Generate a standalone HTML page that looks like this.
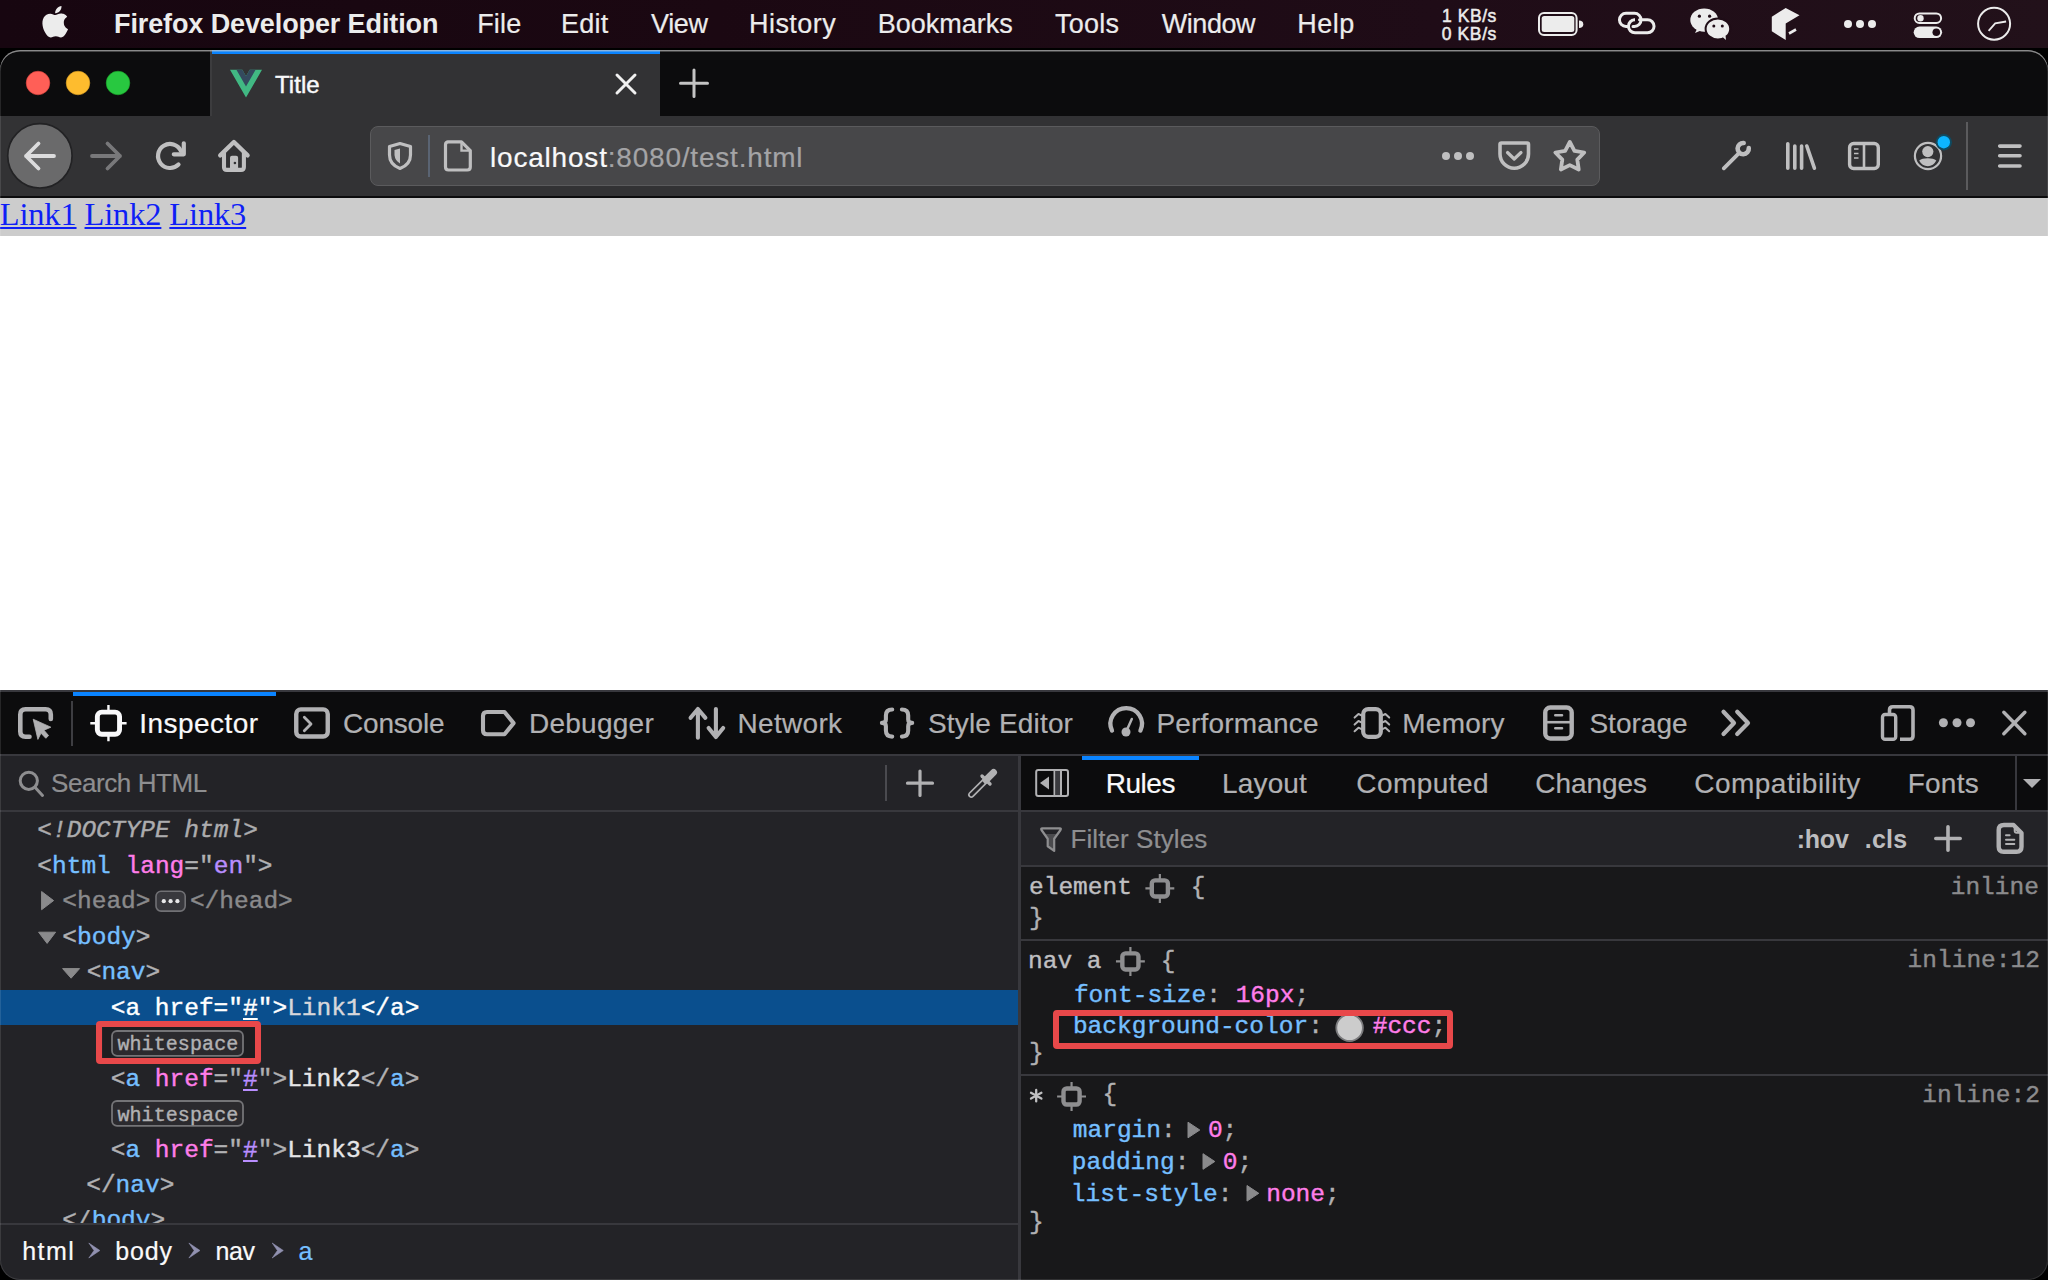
<!DOCTYPE html>
<html><head><meta charset="utf-8"><title>Firefox Developer Edition - Inspector</title>
<style>
html,body{margin:0;padding:0;}
body{width:2048px;height:1280px;position:relative;overflow:hidden;background:#000;font-family:"Liberation Sans",sans-serif;}
.a{position:absolute;}
.t{position:absolute;white-space:pre;line-height:1;}
.mono{-webkit-text-stroke:0.4px currentColor;}
.sans{-webkit-text-stroke:0.2px currentColor;}
svg{position:absolute;overflow:visible;}
.p{color:#b1b1b3}.tg{color:#75bfff}.at{color:#ff7de9}.av{color:#b98eff}.w{color:#f9f9fa}
#win{position:absolute;left:0;top:0;width:2048px;height:1280px;clip-path:inset(50px 0 0 0 round 20px);}
</style></head>
<body>
<div class="a" style="left:0px;top:0px;width:2048px;height:48px;background:linear-gradient(90deg,#170610 0%,#1b0812 35%,#1f0c17 70%,#22111a 100%);"></div>
<svg style="left:0px;top:0px;" width="100" height="48" viewBox="0 0 100 48"><path transform="translate(39.5,6) scale(1.31)" d="M12.152 6.896c-.948 0-2.415-1.078-3.96-1.04-2.04.027-3.91 1.183-4.961 3.014-2.117 3.675-.546 9.103 1.519 12.09 1.013 1.454 2.208 3.09 3.792 3.039 1.52-.065 2.09-.987 3.935-.987 1.831 0 2.35.987 3.96.948 1.637-.026 2.676-1.48 3.676-2.948 1.156-1.688 1.636-3.325 1.662-3.415-.039-.013-3.182-1.221-3.22-4.857-.026-3.04 2.48-4.494 2.597-4.559-1.429-2.09-3.623-2.324-4.39-2.376-2-.156-3.675 1.09-4.61 1.09zM15.53 3.83c.843-1.012 1.4-2.427 1.245-3.83-1.207.052-2.662.805-3.532 1.818-.78.896-1.454 2.338-1.273 3.714 1.338.104 2.715-.688 3.559-1.701" fill="#ececec"/></svg>
<div class="t" style="left:114.00px;top:11.00px;font-size:27px;color:#ececec;font-family:'Liberation Sans',sans-serif;font-weight:700;letter-spacing:-0.11px;">Firefox Developer Edition</div>
<div class="t sans" style="left:477.20px;top:11.00px;font-size:27px;color:#ececec;font-family:'Liberation Sans',sans-serif;letter-spacing:0.17px;">File</div>
<div class="t sans" style="left:561.10px;top:11.00px;font-size:27px;color:#ececec;font-family:'Liberation Sans',sans-serif;letter-spacing:0.23px;">Edit</div>
<div class="t sans" style="left:651.00px;top:11.00px;font-size:27px;color:#ececec;font-family:'Liberation Sans',sans-serif;letter-spacing:-0.38px;">View</div>
<div class="t sans" style="left:749.00px;top:11.00px;font-size:27px;color:#ececec;font-family:'Liberation Sans',sans-serif;letter-spacing:0.45px;">History</div>
<div class="t sans" style="left:877.80px;top:11.00px;font-size:27px;color:#ececec;font-family:'Liberation Sans',sans-serif;">Bookmarks</div>
<div class="t sans" style="left:1055.00px;top:11.00px;font-size:27px;color:#ececec;font-family:'Liberation Sans',sans-serif;letter-spacing:0.24px;">Tools</div>
<div class="t sans" style="left:1161.70px;top:11.00px;font-size:27px;color:#ececec;font-family:'Liberation Sans',sans-serif;letter-spacing:-0.43px;">Window</div>
<div class="t sans" style="left:1297.30px;top:11.00px;font-size:27px;color:#ececec;font-family:'Liberation Sans',sans-serif;letter-spacing:0.46px;">Help</div>
<div class="t sans" style="left:1441.90px;top:8.00px;font-size:17.5px;color:#ececec;font-family:'Liberation Sans',sans-serif;letter-spacing:0.58px;-webkit-text-stroke:0.5px currentColor;">1 KB/s</div>
<div class="t sans" style="left:1441.80px;top:26.00px;font-size:17.5px;color:#ececec;font-family:'Liberation Sans',sans-serif;letter-spacing:0.60px;-webkit-text-stroke:0.5px currentColor;">0 KB/s</div>
<svg style="left:1530px;top:5px;" width="60" height="38" viewBox="1530 5 60 38"><rect x="1539" y="13.1" width="37.6" height="21.9" rx="5" fill="none" stroke="#ececec" stroke-width="2"/><rect x="1541.7" y="15.9" width="32.6" height="16.2" rx="2.5" fill="#ececec"/><path d="M1579 20.5 a4 3.5 0 0 1 0 7.5z" fill="#ececec"/></svg>
<svg style="left:1612px;top:5px;" width="50" height="38" viewBox="1612 5 50 38"><path d="M1627.5 26.4 H1626 A6.55 6.55 0 0 1 1626 13.3 H1634.5 A6.55 6.55 0 0 1 1634.5 26.4 H1633" fill="none" stroke="#ececec" stroke-width="3" stroke-linecap="round"/><path d="M1639.5 19.7 H1647.5 A6.55 6.55 0 0 1 1647.5 32.8 H1635 A6.55 6.55 0 0 1 1635 19.7 H1634" fill="none" stroke="#ececec" stroke-width="3" stroke-linecap="round"/></svg>
<svg style="left:1685px;top:3px;" width="50" height="42" viewBox="1685 3 50 42"><ellipse cx="1704.2" cy="20.1" rx="13.9" ry="11.7" fill="#ececec"/><path d="M1697 29 l-2 4 l6 -2.5z" fill="#ececec"/><ellipse cx="1717.9" cy="28.9" rx="12.3" ry="10.5" fill="#ececec" stroke="#1f0d17" stroke-width="2"/><path d="M1722.5 37 l3.5 3 l-0.5 -4.5z" fill="#ececec"/><circle cx="1699.4" cy="16.2" r="1.6" fill="#1f0d17"/><circle cx="1709.6" cy="16.2" r="1.6" fill="#1f0d17"/><circle cx="1713.8" cy="25.9" r="1.5" fill="#1f0d17"/><circle cx="1722.3" cy="25.9" r="1.5" fill="#1f0d17"/></svg>
<svg style="left:1765px;top:3px;" width="40" height="42" viewBox="1765 3 40 42"><path d="M1785.7 8 L1799.5 15.3 L1785.7 23.5 L1785.7 40 L1771.8 31.3 L1771.8 16.7 Z" fill="#ececec"/><path d="M1789 33.5 L1796 29.5" stroke="#ececec" stroke-width="2.6"/></svg>
<svg style="left:1840px;top:15px;" width="40" height="18" viewBox="1840 15 40 18"><circle cx="1848" cy="24" r="4" fill="#ececec"/><circle cx="1860" cy="24" r="4" fill="#ececec"/><circle cx="1872" cy="24" r="4" fill="#ececec"/></svg>
<svg style="left:1908px;top:8px;" width="40" height="34" viewBox="1908 8 40 34"><rect x="1914.7" y="13.4" width="26.4" height="9.6" rx="4.8" fill="none" stroke="#ececec" stroke-width="2"/><circle cx="1920.5" cy="18.2" r="3.2" fill="#ececec"/><rect x="1913.7" y="26.5" width="28.4" height="11.6" rx="5.8" fill="#ececec"/><circle cx="1936.3" cy="32.3" r="3.8" fill="#1f0d17"/></svg>
<svg style="left:1970px;top:3px;" width="48" height="42" viewBox="1970 3 48 42"><circle cx="1994.1" cy="23.75" r="16" fill="none" stroke="#ececec" stroke-width="2"/><path d="M1988.6 30.8 L1995.2 23.3 L2006.1 21.5" fill="none" stroke="#ececec" stroke-width="1.8"/></svg>
<div id="win">
<div class="a" style="left:0px;top:50px;width:2048px;height:66px;background:#0c0c0d;"></div>
<div class="a" style="left:210px;top:50px;width:450px;height:66px;background:#323234;"></div>
<div class="a" style="left:210px;top:50px;width:2px;height:66px;background:#3c3c3e;"></div>
<div class="a" style="left:212px;top:50px;width:448px;height:4px;background:#0a84ff;"></div>
<svg style="left:20px;top:65px;" width="120" height="36" viewBox="20 65 120 36"><circle cx="38" cy="83" r="11.8" fill="#ff5f57" stroke="#e0443e" stroke-width="0.6"/><circle cx="78" cy="83" r="11.8" fill="#febc2e" stroke="#dea123" stroke-width="0.6"/><circle cx="118" cy="83" r="11.8" fill="#28c840" stroke="#1aab29" stroke-width="0.6"/></svg>
<svg style="left:228px;top:68px;" width="36" height="32" viewBox="228 68 36 32"><g transform="translate(230,69.8) scale(0.1223)"><path d="M161.096.001l-30.225 52.351L100.647.001H-.005l130.877 226.688L261.749.001z" fill="#41b883"/><path d="M161.096.001l-30.225 52.351L100.647.001H52.346l78.526 136.01L209.398.001z" fill="#34495e"/></g></svg>
<div class="t sans" style="left:275.00px;top:73.00px;font-size:24px;color:#f9f9fa;font-family:'Liberation Sans',sans-serif;letter-spacing:0.05px;-webkit-text-stroke:0.45px currentColor;">Title</div>
<svg style="left:610px;top:68px;" width="32" height="32" viewBox="610 68 32 32"><path d="M617 75 L635 93 M635 75 L617 93" stroke="#f0f0f0" stroke-width="3" stroke-linecap="round"/></svg>
<svg style="left:676px;top:65px;" width="36" height="36" viewBox="676 65 36 36"><path d="M694 70 V96.5 M680.5 83.2 H707.5" stroke="#c4c4c4" stroke-width="3" stroke-linecap="round"/></svg>
<div class="a" style="left:0px;top:116px;width:2048px;height:80px;background:#323234;"></div>
<div class="a" style="left:0px;top:196px;width:2048px;height:2px;background:#0c0c0d;"></div>
<svg style="left:4px;top:120px;" width="72" height="72" viewBox="4 120 72 72"><circle cx="39.9" cy="155.8" r="32.2" fill="#6a6a6b" stroke="#222224" stroke-width="1.7"/><path d="M26 156 H54 M38.5 143.5 L26 156 L38.5 168.5" fill="none" stroke="#dcdcdd" stroke-width="3.8" stroke-linecap="round" stroke-linejoin="round"/></svg>
<svg style="left:84px;top:136px;" width="44" height="40" viewBox="84 136 44 40"><path d="M120 156 H92 M107.5 143.5 L120 156 L107.5 168.5" fill="none" stroke="#78787a" stroke-width="3.8" stroke-linecap="round" stroke-linejoin="round"/></svg>
<svg style="left:150px;top:136px;" width="44" height="40" viewBox="150 136 44 40"><path d="M178.5 164.5 A12 12 0 1 1 180.9 150.9" fill="none" stroke="#bfbfc0" stroke-width="4.2" stroke-linecap="round"/><path d="M173.8 154.3 H183.8 V143.3" fill="none" stroke="#bfbfc0" stroke-width="4.2" stroke-linecap="round" stroke-linejoin="round"/></svg>
<svg style="left:212px;top:134px;" width="44" height="42" viewBox="212 134 44 42"><path d="M220.2 155.4 L233.9 142 L247.6 155.4" fill="none" stroke="#bfbfc0" stroke-width="4.3" stroke-linecap="round" stroke-linejoin="round"/><path d="M224 151.5 V167 Q224 169.9 226.9 169.9 H241 Q243.9 169.9 243.9 167 V151.5" fill="none" stroke="#bfbfc0" stroke-width="4.1" stroke-linejoin="round"/><path d="M230 169.5 V157.8 Q230 155.8 232 155.8 H236.1 Q238.1 155.8 238.1 157.8 V169.5 Z" fill="#bfbfc0"/><circle cx="234.9" cy="163" r="1.3" fill="#323234"/></svg>
<div class="a" style="left:370px;top:126px;width:1228px;height:58px;background:#474749;border:1px solid #5b5b5d;border-radius:8px;"></div>
<svg style="left:384px;top:138px;" width="32" height="36" viewBox="384 138 32 36"><path d="M400 143.5 L410.5 146.5 V155 Q410.5 164.5 400 168.5 Q389.5 164.5 389.5 155 V146.5 Z" fill="none" stroke="#bfbfc0" stroke-width="3.2" stroke-linejoin="round"/><path d="M400 148.5 V163.5 Q395 160.5 394.5 155 V150 Z" fill="#bfbfc0"/></svg>
<div class="a" style="left:428px;top:135px;width:2px;height:42px;background:#5a6473;"></div>
<svg style="left:440px;top:136px;" width="36" height="40" viewBox="440 136 36 40"><path d="M447.5 141.8 H461.5 L470.3 150.6 V167 Q470.3 170 467.3 170 H448.5 Q445.5 170 445.5 167 V144.8 Q445.5 141.8 448.5 141.8 Z" fill="none" stroke="#bfbfc0" stroke-width="3.2" stroke-linejoin="round"/><path d="M461.5 142 V150.6 H470" fill="none" stroke="#bfbfc0" stroke-width="2.4"/></svg>
<div class="t sans" style="left:490.00px;top:144.00px;font-size:28px;color:#f9f9fa;font-family:'Liberation Sans',sans-serif;letter-spacing:0.80px;">localhost<span style="color:#a4a4a6">:8080/test.html</span></div>
<svg style="left:1436px;top:146px;" width="44" height="20" viewBox="1436 146 44 20"><circle cx="1446" cy="156" r="4" fill="#bfbfc0"/><circle cx="1458" cy="156" r="4" fill="#bfbfc0"/><circle cx="1470" cy="156" r="4" fill="#bfbfc0"/></svg>
<svg style="left:1494px;top:136px;" width="40" height="40" viewBox="1494 136 40 40"><path d="M1500 144.5 Q1500 143 1501.5 143 H1527 Q1528.5 143 1528.5 144.5 V154 A14.25 14.25 0 0 1 1500 154 Z" fill="none" stroke="#bfbfc0" stroke-width="3.6" stroke-linejoin="round"/><path d="M1507.5 152.5 L1514.2 159 L1521 152.5" fill="none" stroke="#bfbfc0" stroke-width="3.2" stroke-linecap="round" stroke-linejoin="round"/></svg>
<svg style="left:1548px;top:134px;" width="44" height="44" viewBox="1548 134 44 44"><polygon points="1569.80,142.00 1574.44,150.81 1584.26,152.50 1577.31,159.64 1578.73,169.50 1569.80,165.10 1560.87,169.50 1562.29,159.64 1555.34,152.50 1565.16,150.81" fill="none" stroke="#bfbfc0" stroke-width="3.8" stroke-linejoin="round"/></svg>
<svg style="left:1716px;top:136px;" width="40" height="40" viewBox="1716 136 40 40"><path d="M1723.8 168.3 L1738.5 153.6" stroke="#bfbfc0" stroke-width="3.8" stroke-linecap="round"/><path d="M1748.78 148.11 A5.6 5.6 0 1 1 1743.69 143.02" fill="none" stroke="#bfbfc0" stroke-width="4.6" stroke-linecap="round"/></svg>
<svg style="left:1780px;top:136px;" width="42" height="40" viewBox="1780 136 42 40"><path d="M1787.8 143.8 V168.2 M1794.8 146 V168.2 M1801.6 146 V168.2 M1806.8 146 L1814.4 168.2" stroke="#bfbfc0" stroke-width="3.6" stroke-linecap="round"/></svg>
<svg style="left:1842px;top:136px;" width="44" height="40" viewBox="1842 136 44 40"><rect x="1849.6" y="143.5" width="28.7" height="25" rx="4" fill="none" stroke="#bfbfc0" stroke-width="3.4"/><path d="M1864 144 V168" stroke="#bfbfc0" stroke-width="2.6"/><path d="M1854 149 H1858.5 M1854 153.5 H1858.5 M1854 158 H1858.5" stroke="#bfbfc0" stroke-width="1.6"/></svg>
<svg style="left:1908px;top:130px;" width="48" height="46" viewBox="1908 130 48 46"><circle cx="1928" cy="156" r="13.1" fill="none" stroke="#bfbfc0" stroke-width="2.2"/><circle cx="1927.8" cy="151.6" r="5.6" fill="#bfbfc0"/><path d="M1919.2 160.5 Q1922 158.2 1927.8 158.2 Q1933.5 158.2 1936.3 160.5 Q1933.5 166.2 1927.8 166.2 Q1922 166.2 1919.2 160.5 Z" fill="#bfbfc0"/><circle cx="1943.8" cy="142.2" r="8.2" fill="#104a60"/><circle cx="1943.8" cy="142.2" r="6.2" fill="#0db5ff"/></svg>
<div class="a" style="left:1966px;top:122px;width:2px;height:68px;background:#5b5b5d;"></div>
<svg style="left:1992px;top:140px;" width="36" height="32" viewBox="1992 140 36 32"><path d="M1999.7 146.1 H2020 M1999.7 155.8 H2020 M1999.7 166 H2020" stroke="#bfbfc0" stroke-width="3.6" stroke-linecap="round"/></svg>
<div class="a" style="left:0px;top:198px;width:2048px;height:492px;background:#fff;"></div>
<div class="a" style="left:0px;top:198px;width:2048px;height:38px;background:#ccc;"></div>
<div class="t" style="left:-0.30px;top:198.00px;font-size:32.4px;color:#0f1ff6;font-family:'Liberation Serif',serif;letter-spacing:-0.11px;"><span style="text-decoration:underline;text-decoration-thickness:2px;text-underline-offset:2px">Link1</span> <span style="text-decoration:underline;text-decoration-thickness:2px;text-underline-offset:2px">Link2</span> <span style="text-decoration:underline;text-decoration-thickness:2px;text-underline-offset:2px">Link3</span></div>
<div class="a" style="left:0px;top:690px;width:2048px;height:2px;background:#38383d;"></div>
<div class="a" style="left:0px;top:692px;width:2048px;height:62px;background:#0c0c0d;"></div>
<div class="a" style="left:0px;top:754px;width:2048px;height:2px;background:#38383d;"></div>
<div class="a" style="left:73px;top:692px;width:203px;height:4px;background:#0a84ff;"></div>
<svg style="left:10px;top:698px;" width="50" height="50" viewBox="10 698 50 50"><path d="M29.5 736.8 H25.5 Q20.3 736.8 20.3 731.6 V714.4 Q20.3 709.2 25.5 709.2 H45.6 Q50.8 709.2 50.8 714.4 V719" fill="none" stroke="#b1b1b3" stroke-width="4.6" stroke-linecap="round" stroke-linejoin="round"/><path d="M33.2 719.2 L50.9 727.2 L44 730.2 L48.6 735.6 L45.8 738.3 L41 733.2 L37.9 739.4 Z" fill="#b1b1b3" stroke="#b1b1b3" stroke-width="0.8" stroke-linejoin="round"/></svg>
<div class="a" style="left:71px;top:701px;width:2px;height:45px;background:#3e3e42;"></div>
<svg style="left:86px;top:700px;" width="46" height="46" viewBox="86 700 46 46"><rect x="97.35000000000001" y="712.1" width="22.2" height="22.2" rx="4.44" fill="none" stroke="#f9f9fa" stroke-width="4.9"/><path d="M108.45 705.0500000000001 V712.1 M108.45 734.3000000000001 V741.35 M90.30000000000001 723.2 H97.35000000000001 M119.55 723.2 H126.6" stroke="#f9f9fa" stroke-width="2.4"/></svg>
<div class="t sans" style="left:139.30px;top:710.00px;font-size:28px;color:#f9f9fa;font-family:'Liberation Sans',sans-serif;letter-spacing:0.46px;">Inspector</div>
<div class="t sans" style="left:343.00px;top:710.00px;font-size:28px;color:#b1b1b3;font-family:'Liberation Sans',sans-serif;letter-spacing:-0.19px;">Console</div>
<div class="t sans" style="left:529.00px;top:710.00px;font-size:28px;color:#b1b1b3;font-family:'Liberation Sans',sans-serif;letter-spacing:0.25px;">Debugger</div>
<div class="t sans" style="left:737.60px;top:710.00px;font-size:28px;color:#b1b1b3;font-family:'Liberation Sans',sans-serif;letter-spacing:0.29px;">Network</div>
<div class="t sans" style="left:928.00px;top:710.00px;font-size:28px;color:#b1b1b3;font-family:'Liberation Sans',sans-serif;letter-spacing:0.16px;">Style Editor</div>
<div class="t sans" style="left:1156.50px;top:710.00px;font-size:28px;color:#b1b1b3;font-family:'Liberation Sans',sans-serif;letter-spacing:0.17px;">Performance</div>
<div class="t sans" style="left:1402.30px;top:710.00px;font-size:28px;color:#b1b1b3;font-family:'Liberation Sans',sans-serif;letter-spacing:0.22px;">Memory</div>
<div class="t sans" style="left:1589.40px;top:710.00px;font-size:28px;color:#b1b1b3;font-family:'Liberation Sans',sans-serif;letter-spacing:0.02px;">Storage</div>
<svg style="left:290px;top:702px;" width="44" height="42" viewBox="290 702 44 42"><rect x="296.25" y="709.4" width="31.5" height="27.05" rx="4.5" fill="none" stroke="#b1b1b3" stroke-width="4.4"/><path d="M304.3 717.2 L311 723.9 L304.3 730.8" fill="none" stroke="#b1b1b3" stroke-width="2.8" stroke-linecap="round" stroke-linejoin="round"/></svg>
<svg style="left:476px;top:704px;" width="46" height="38" viewBox="476 704 46 38"><path d="M487 712 H504.5 L513.6 723.1 L504.5 734.2 H487 Q483 734.2 483 730.2 V716 Q483 712 487 712 Z" fill="none" stroke="#b1b1b3" stroke-width="4.1" stroke-linejoin="round"/></svg>
<svg style="left:684px;top:702px;" width="46" height="42" viewBox="684 702 46 42"><path d="M697.9 737.8 V709 M690.6 717.8 L697.9 709 L705.4 717.8" fill="none" stroke="#b1b1b3" stroke-width="4.1" stroke-linecap="round" stroke-linejoin="round"/><path d="M715.9 709 V737 M708.6 728 L715.9 737 L723.2 728" fill="none" stroke="#b1b1b3" stroke-width="4.1" stroke-linecap="round" stroke-linejoin="round"/></svg>
<svg style="left:874px;top:702px;" width="46" height="42" viewBox="874 702 46 42"><path d="M892.2 709.5 Q885.9 709.5 885.9 715.5 V719.5 Q885.9 722.9 881.9 722.9 Q885.9 722.9 885.9 726.3 V730.6 Q885.9 736.6 892.2 736.6" fill="none" stroke="#b1b1b3" stroke-width="4.1" stroke-linecap="round" stroke-linejoin="round"/><path d="M901.9 709.5 Q908.2 709.5 908.2 715.5 V719.5 Q908.2 722.9 912.2 722.9 Q908.2 722.9 908.2 726.3 V730.6 Q908.2 736.6 901.9 736.6" fill="none" stroke="#b1b1b3" stroke-width="4.1" stroke-linecap="round" stroke-linejoin="round"/></svg>
<svg style="left:1102px;top:700px;" width="48" height="42" viewBox="1102 700 48 42"><path d="M1112.0 730.6 A15.75 15.75 0 1 1 1140.4 730.6" fill="none" stroke="#b1b1b3" stroke-width="4.3" stroke-linecap="round"/><circle cx="1126" cy="732" r="4.5" fill="#b1b1b3"/><path d="M1126 732 L1131.8 719" stroke="#b1b1b3" stroke-width="2.5" stroke-linecap="round"/></svg>
<svg style="left:1350px;top:702px;" width="44" height="42" viewBox="1350 702 44 42"><rect x="1363.2" y="709.1" width="17.6" height="27.7" rx="5" fill="none" stroke="#b1b1b3" stroke-width="4.2"/><path d="M1354.6 717.6 L1358.5 714.0 L1362 715.6 M1389.2 717.6 L1385.4 714.0 L1382 715.6 M1354.6 724.6 L1358.5 721.0 L1362 722.6 M1389.2 724.6 L1385.4 721.0 L1382 722.6 M1354.6 731.3 L1358.5 727.6999999999999 L1362 729.3 M1389.2 731.3 L1385.4 727.6999999999999 L1382 729.3 " fill="none" stroke="#b1b1b3" stroke-width="2" stroke-linecap="round" stroke-linejoin="round"/></svg>
<svg style="left:1538px;top:700px;" width="40" height="46" viewBox="1538 700 40 46"><rect x="1545.25" y="707.5" width="26.45" height="31" rx="5" fill="none" stroke="#b1b1b3" stroke-width="4.4"/><path d="M1545.5 722.2 H1571.5" stroke="#b1b1b3" stroke-width="2.6"/><path d="M1555.3 715.3 H1562 M1555.3 728.3 H1562" stroke="#b1b1b3" stroke-width="2.6" stroke-linecap="round"/></svg>
<svg style="left:1716px;top:704px;" width="40" height="38" viewBox="1716 704 40 38"><path d="M1723.5 711.8 L1734 723 L1723.5 734 M1737.2 711.8 L1748 723 L1737.2 734" fill="none" stroke="#b1b1b3" stroke-width="4.2" stroke-linecap="round" stroke-linejoin="round"/></svg>
<svg style="left:1876px;top:700px;" width="44" height="46" viewBox="1876 700 44 46"><path d="M1889.5 713 V710 Q1889.5 706.7 1892.8 706.7 H1909.7 Q1913 706.7 1913 710 V736 Q1913 739.3 1909.7 739.3 H1900" fill="none" stroke="#b1b1b3" stroke-width="3.6"/><rect x="1882.5" y="714.5" width="13.2" height="24.8" rx="2.6" fill="none" stroke="#b1b1b3" stroke-width="3.4"/></svg>
<svg style="left:1934px;top:714px;" width="46" height="18" viewBox="1934 714 46 18"><circle cx="1943.4" cy="722.7" r="4.5" fill="#b1b1b3"/><circle cx="1957" cy="722.7" r="4.5" fill="#b1b1b3"/><circle cx="1970.5" cy="722.7" r="4.5" fill="#b1b1b3"/></svg>
<svg style="left:1998px;top:706px;" width="34" height="34" viewBox="1998 706 34 34"><path d="M2003.8 712.2 L2024.9 733.8 M2024.9 712.2 L2003.8 733.8" stroke="#b1b1b3" stroke-width="3.4" stroke-linecap="round"/></svg>
<div class="a" style="left:0px;top:756px;width:1018px;height:524px;background:#232327;"></div>
<div class="a" style="left:0px;top:810px;width:1018px;height:2px;background:#38383d;"></div>
<div class="a" style="left:0px;top:1223px;width:1018px;height:2px;background:#38383d;"></div>
<svg style="left:14px;top:764px;" width="36" height="38" viewBox="14 764 36 38"><circle cx="28.8" cy="780.8" r="8.6" fill="none" stroke="#8e8e90" stroke-width="3"/><path d="M35.2 787.4 L42.5 795.5" stroke="#8e8e90" stroke-width="3" stroke-linecap="round"/></svg>
<div class="t sans" style="left:51.00px;top:770.00px;font-size:26px;color:#8e8e90;font-family:'Liberation Sans',sans-serif;letter-spacing:-0.41px;">Search HTML</div>
<div class="a" style="left:885px;top:765px;width:2px;height:36px;background:#4a4a4f;"></div>
<svg style="left:900px;top:764px;" width="40" height="38" viewBox="900 764 40 38"><path d="M920 771 V795.5 M907.5 783.2 H932.5" stroke="#b1b1b3" stroke-width="3.2" stroke-linecap="round"/></svg>
<svg style="left:962px;top:764px;" width="40" height="38" viewBox="962 764 40 38"><path d="M984.5 781.5 L971.3 794.7" stroke="#b1b1b3" stroke-width="6.4" stroke-linecap="round"/><path d="M983 783 L971.3 794.7" stroke="#232327" stroke-width="3.1" stroke-linecap="round"/><path d="M982 776 L990 784" stroke="#b1b1b3" stroke-width="3.4" stroke-linecap="round"/><path d="M986 780 L993.6 772.4" stroke="#b1b1b3" stroke-width="6.8" stroke-linecap="round"/></svg>
<div class="a" style="left:0px;top:990px;width:1018px;height:35px;background:#0a4f8e;"></div>
<div class="t mono" style="left:37.30px;top:819.00px;font-size:24.5px;color:#acacae;font-family:'Liberation Mono',monospace;font-style:italic;">&lt;!DOCTYPE html&gt;</div>
<div class="t mono" style="left:37.30px;top:855.00px;font-size:24.5px;color:#b1b1b3;font-family:'Liberation Mono',monospace;"><span style="color:#b1b1b3">&lt;</span><span style="color:#75bfff">html</span> <span style="color:#ff7de9">lang</span><span style="color:#b1b1b3">="</span><span style="color:#b98eff">en</span><span style="color:#b1b1b3">"&gt;</span></div>
<svg style="left:38px;top:888px;" width="20" height="26" viewBox="38 888 20 26"><path d="M41.6 891.5 L53.6 900.6 L41.6 909.7 Z" fill="#8a8a8c" stroke="#8a8a8c" stroke-width="1" stroke-linejoin="round"/></svg>
<div class="t mono" style="left:62.30px;top:890.00px;font-size:24.5px;color:#8a8a8c;font-family:'Liberation Mono',monospace;">&lt;head&gt;</div>
<svg style="left:150px;top:886px;" width="40" height="30" viewBox="150 886 40 30"><rect x="156" y="891.3" width="29.2" height="19.8" rx="5" fill="#38383d" stroke="#717175" stroke-width="1.6"/><circle cx="163.8" cy="901.2" r="2.1" fill="#e8e8ea"/><circle cx="170.6" cy="901.2" r="2.1" fill="#e8e8ea"/><circle cx="177.4" cy="901.2" r="2.1" fill="#e8e8ea"/></svg>
<div class="t mono" style="left:189.90px;top:890.00px;font-size:24.5px;color:#8a8a8c;font-family:'Liberation Mono',monospace;">&lt;/head&gt;</div>
<svg style="left:34px;top:928px;" width="26" height="20" viewBox="34 928 26 20"><path d="M38.6 932.2 L55.6 932.2 L47.1 943.4 Z" fill="#8a8a8c" stroke="#8a8a8c" stroke-width="1" stroke-linejoin="round"/></svg>
<div class="t mono" style="left:62.30px;top:926.00px;font-size:24.5px;color:#b1b1b3;font-family:'Liberation Mono',monospace;"><span style="color:#b1b1b3">&lt;</span><span style="color:#75bfff">body</span><span style="color:#b1b1b3">&gt;</span></div>
<svg style="left:58px;top:964px;" width="26" height="20" viewBox="58 964 26 20"><path d="M62.6 968.6 L79.6 968.6 L71.1 978.2 Z" fill="#8a8a8c" stroke="#8a8a8c" stroke-width="1" stroke-linejoin="round"/></svg>
<div class="t mono" style="left:86.70px;top:961.00px;font-size:24.5px;color:#b1b1b3;font-family:'Liberation Mono',monospace;"><span style="color:#b1b1b3">&lt;</span><span style="color:#75bfff">nav</span><span style="color:#b1b1b3">&gt;</span></div>
<div class="t mono" style="left:110.70px;top:997.00px;font-size:24.5px;color:#ffffff;font-family:'Liberation Mono',monospace;">&lt;a href="<span style="text-decoration:underline;text-underline-offset:3px">#</span>"&gt;<span style="color:#d7d7db">Link1</span>&lt;/a&gt;</div>
<div class="t mono" style="left:110.70px;top:1068.00px;font-size:24.5px;color:#b1b1b3;font-family:'Liberation Mono',monospace;"><span style="color:#b1b1b3">&lt;</span><span style="color:#75bfff">a</span> <span style="color:#ff7de9">href</span><span style="color:#b1b1b3">="</span><span style="color:#b98eff;text-decoration:underline;text-underline-offset:3px">#</span><span style="color:#b1b1b3">"&gt;</span><span style="color:#e6e6e8">Link2</span><span style="color:#b1b1b3">&lt;/</span><span style="color:#75bfff">a</span><span style="color:#b1b1b3">&gt;</span></div>
<div class="t mono" style="left:110.70px;top:1139.00px;font-size:24.5px;color:#b1b1b3;font-family:'Liberation Mono',monospace;"><span style="color:#b1b1b3">&lt;</span><span style="color:#75bfff">a</span> <span style="color:#ff7de9">href</span><span style="color:#b1b1b3">="</span><span style="color:#b98eff;text-decoration:underline;text-underline-offset:3px">#</span><span style="color:#b1b1b3">"&gt;</span><span style="color:#e6e6e8">Link3</span><span style="color:#b1b1b3">&lt;/</span><span style="color:#75bfff">a</span><span style="color:#b1b1b3">&gt;</span></div>
<div class="a" style="left:102.5px;top:1027px;width:153px;height:32px;background:#1e1e21;"></div>
<svg style="left:106px;top:1027.5px;" width="145" height="32" viewBox="106 1027.5 145 32"><rect x="112" y="1030.5" width="131" height="24.8" rx="5" fill="#2b2a2e" stroke="#747477" stroke-width="1.8"/></svg>
<div class="t mono" style="left:117.40px;top:1035.00px;font-size:20px;color:#b1b1b3;font-family:'Liberation Mono',monospace;letter-spacing:0.09px;">whitespace</div>
<svg style="left:106px;top:1098.4px;" width="145" height="32" viewBox="106 1098.4 145 32"><rect x="112" y="1101.4" width="131" height="24.8" rx="5" fill="#2b2a2e" stroke="#747477" stroke-width="1.8"/></svg>
<div class="t mono" style="left:117.40px;top:1106.00px;font-size:20px;color:#b1b1b3;font-family:'Liberation Mono',monospace;letter-spacing:0.09px;">whitespace</div>
<div class="t mono" style="left:86.20px;top:1174.00px;font-size:24.5px;color:#b1b1b3;font-family:'Liberation Mono',monospace;"><span style="color:#b1b1b3">&lt;/</span><span style="color:#75bfff">nav</span><span style="color:#b1b1b3">&gt;</span></div>
<div class="a" style="left:0;top:1210px;width:1018px;height:13px;overflow:hidden;">
<div class="a" style="left:0;top:-1210px;width:1018px;height:1280px;">
<div class="t mono" style="left:62.30px;top:1209.00px;font-size:24.5px;color:#b1b1b3;font-family:'Liberation Mono',monospace;"><span style="color:#b1b1b3">&lt;/</span><span style="color:#75bfff">body</span><span style="color:#b1b1b3">&gt;</span></div>
</div></div>
<div class="t sans" style="left:22.20px;top:1239.00px;font-size:25px;color:#f9f9fa;font-family:'Liberation Sans',sans-serif;letter-spacing:1.44px;">html</div>
<div class="t sans" style="left:115.20px;top:1239.00px;font-size:25px;color:#f9f9fa;font-family:'Liberation Sans',sans-serif;letter-spacing:0.90px;">body</div>
<div class="t sans" style="left:215.60px;top:1239.00px;font-size:25px;color:#f9f9fa;font-family:'Liberation Sans',sans-serif;letter-spacing:-0.40px;">nav</div>
<div class="t sans" style="left:298.60px;top:1239.00px;font-size:25px;color:#75bfff;font-family:'Liberation Sans',sans-serif;">a</div>
<svg style="left:80px;top:1238px;" width="220" height="26" viewBox="80 1238 220 26"><path d="M88.8 1243 L99.89999999999999 1250.5 L88.8 1258 L94.0 1250.5 Z" fill="#9191b0" stroke="#9191b0" stroke-width="0.6" stroke-linejoin="round"/><path d="M188.9 1243 L200.0 1250.5 L188.9 1258 L194.1 1250.5 Z" fill="#9191b0" stroke="#9191b0" stroke-width="0.6" stroke-linejoin="round"/><path d="M272.2 1243 L283.3 1250.5 L272.2 1258 L277.4 1250.5 Z" fill="#9191b0" stroke="#9191b0" stroke-width="0.6" stroke-linejoin="round"/></svg>
<div class="a" style="left:1018px;top:756px;width:3px;height:524px;background:#38383d;"></div>
<div class="a" style="left:1021px;top:756px;width:1027px;height:54px;background:#0c0c0d;"></div>
<div class="a" style="left:1021px;top:810px;width:1027px;height:2px;background:#38383d;"></div>
<div class="a" style="left:1021px;top:812px;width:1027px;height:53px;background:#232327;"></div>
<div class="a" style="left:1021px;top:865px;width:1027px;height:2px;background:#38383d;"></div>
<div class="a" style="left:1021px;top:867px;width:1027px;height:413px;background:#18181a;"></div>
<div class="a" style="left:1021px;top:939px;width:1027px;height:2px;background:#38383d;"></div>
<div class="a" style="left:1021px;top:1074px;width:1027px;height:2px;background:#38383d;"></div>
<div class="a" style="left:1082px;top:756px;width:117px;height:4px;background:#0a84ff;"></div>
<svg style="left:1030px;top:764px;" width="44" height="38" viewBox="1030 764 44 38"><rect x="1036.2" y="770.1" width="31.8" height="25.8" rx="2" fill="none" stroke="#b1b1b3" stroke-width="2"/><path d="M1054.5 770.5 V795.5 M1061 770.5 V795.5" stroke="#b1b1b3" stroke-width="2"/><path d="M1049 776.5 V789.5 L1040 783 Z" fill="#b1b1b3"/><rect x="1055.5" y="771" width="4.5" height="24" fill="#3a3a3e"/></svg>
<div class="t sans" style="left:1105.70px;top:770.00px;font-size:28px;color:#f9f9fa;font-family:'Liberation Sans',sans-serif;letter-spacing:-0.45px;">Rules</div>
<div class="t sans" style="left:1222.10px;top:770.00px;font-size:28px;color:#b1b1b3;font-family:'Liberation Sans',sans-serif;letter-spacing:0.14px;">Layout</div>
<div class="t sans" style="left:1356.30px;top:770.00px;font-size:28px;color:#b1b1b3;font-family:'Liberation Sans',sans-serif;letter-spacing:0.43px;">Computed</div>
<div class="t sans" style="left:1535.30px;top:770.00px;font-size:28px;color:#b1b1b3;font-family:'Liberation Sans',sans-serif;letter-spacing:-0.08px;">Changes</div>
<div class="t sans" style="left:1694.30px;top:770.00px;font-size:28px;color:#b1b1b3;font-family:'Liberation Sans',sans-serif;letter-spacing:0.47px;">Compatibility</div>
<div class="t sans" style="left:1907.70px;top:770.00px;font-size:28px;color:#b1b1b3;font-family:'Liberation Sans',sans-serif;letter-spacing:0.24px;">Fonts</div>
<div class="a" style="left:2015px;top:756px;width:2px;height:54px;background:#38383d;"></div>
<svg style="left:2018px;top:772px;" width="28" height="22" viewBox="2018 772 28 22"><path d="M2023 778.9 H2041 L2032 788 Z" fill="#b1b1b3"/></svg>
<svg style="left:1034px;top:822px;" width="34" height="36" viewBox="1034 822 34 36"><path d="M1044.5 834 H1057.5 L1054.2 838.75 V850.9 L1047.7 846.25 V838.75 Z" fill="#4a4a4d"/><path d="M1042.3 828.3 H1059.8 Q1061.5 828.3 1060.5 830 L1054.2 838.75 V850.9 L1047.7 846.25 V838.75 L1041.5 830 Q1040.6 828.3 1042.3 828.3 Z" fill="none" stroke="#8e8e90" stroke-width="2.2" stroke-linejoin="round"/></svg>
<div class="t sans" style="left:1070.50px;top:826.00px;font-size:26px;color:#8e8e90;font-family:'Liberation Sans',sans-serif;letter-spacing:0.08px;">Filter Styles</div>
<div class="t" style="left:1796.70px;top:827.00px;font-size:25px;color:#bdbdbf;font-family:'Liberation Sans',sans-serif;font-weight:700;letter-spacing:-0.22px;">:hov</div>
<div class="t" style="left:1864.80px;top:827.00px;font-size:25px;color:#bdbdbf;font-family:'Liberation Sans',sans-serif;font-weight:700;letter-spacing:0.20px;">.cls</div>
<svg style="left:1928px;top:820px;" width="40" height="36" viewBox="1928 820 40 36"><path d="M1948 826.8 V850.2 M1935.8 838.5 H1960.2" stroke="#b1b1b3" stroke-width="3.6" stroke-linecap="round"/></svg>
<svg style="left:1990px;top:818px;" width="40" height="40" viewBox="1990 818 40 40"><path d="M2004 825 H2013.5 L2021.5 833 V846.8 Q2021.5 851.8 2016.5 851.8 H2003.7 Q1998.7 851.8 1998.7 846.8 V830 Q1998.7 825 2004 825 Z" fill="none" stroke="#b1b1b3" stroke-width="4.4" stroke-linejoin="round"/><path d="M2006 835.2 H2009.6 M2006 839.7 H2014.3 M2006 844 H2014.3" stroke="#b1b1b3" stroke-width="2" stroke-linecap="round"/><path d="M2014.6 828 V830.8 Q2014.6 832.8 2016.6 832.8 H2019 Z" fill="#232327" stroke="#b1b1b3" stroke-width="1.8" stroke-linejoin="round"/></svg>
<div class="t mono" style="left:1029.00px;top:876.00px;font-size:24.5px;color:#bfbfc1;font-family:'Liberation Mono',monospace;">element</div>
<svg style="left:1140px;top:870px;" width="40" height="36" viewBox="1140 870 40 36"><rect x="1151.8" y="880.4000000000001" width="16.1" height="16.1" rx="3.2200000000000006" fill="none" stroke="#8e8e90" stroke-width="4.4"/><path d="M1159.85 874.0 V880.4000000000001 M1159.85 896.5 V902.9000000000001 M1145.3999999999999 888.45 H1151.8 M1167.8999999999999 888.45 H1174.3" stroke="#8e8e90" stroke-width="2.2"/></svg>
<div class="t mono" style="left:1190.80px;top:876.00px;font-size:24.5px;color:#b1b1b3;font-family:'Liberation Mono',monospace;">{</div>
<div class="t mono" style="left:1029.00px;top:907.00px;font-size:24.5px;color:#b1b1b3;font-family:'Liberation Mono',monospace;">}</div>
<div class="t mono" style="left:1950.69px;top:876.00px;font-size:24.5px;color:#8b8b8d;font-family:'Liberation Mono',monospace;">inline</div>
<div class="t mono" style="left:1028.00px;top:950.00px;font-size:24.5px;color:#bfbfc1;font-family:'Liberation Mono',monospace;">nav a</div>
<svg style="left:1110px;top:943px;" width="40" height="36" viewBox="1110 943 40 36"><rect x="1122.3500000000001" y="953.4000000000001" width="16.1" height="16.1" rx="3.2200000000000006" fill="none" stroke="#8e8e90" stroke-width="4.4"/><path d="M1130.4 947.0 V953.4000000000001 M1130.4 969.5 V975.9000000000001 M1115.95 961.45 H1122.3500000000001 M1138.45 961.45 H1144.8500000000001" stroke="#8e8e90" stroke-width="2.2"/></svg>
<div class="t mono" style="left:1160.80px;top:950.00px;font-size:24.5px;color:#b1b1b3;font-family:'Liberation Mono',monospace;">{</div>
<div class="t mono" style="left:1907.58px;top:949.00px;font-size:24.5px;color:#8b8b8d;font-family:'Liberation Mono',monospace;">inline:12</div>
<div class="t mono" style="left:1073.90px;top:984.00px;font-size:24.5px;color:#b1b1b3;font-family:'Liberation Mono',monospace;"><span style="color:#75bfff">font-size</span><span style="color:#b1b1b3">: </span><span style="color:#ff7de9">16px</span><span style="color:#b1b1b3">;</span></div>
<div class="t mono" style="left:1072.90px;top:1015.00px;font-size:24.5px;color:#b1b1b3;font-family:'Liberation Mono',monospace;"><span style="color:#75bfff">background-color</span><span style="color:#b1b1b3">:</span></div>
<svg style="left:1330px;top:1010px;" width="40" height="36" viewBox="1330 1010 40 36"><circle cx="1349.6" cy="1027.7" r="13.3" fill="#cccccc" stroke="#7b7b7d" stroke-width="1.8"/></svg>
<div class="t mono" style="left:1372.70px;top:1015.00px;font-size:24.5px;color:#b1b1b3;font-family:'Liberation Mono',monospace;"><span style="color:#ff7de9">#ccc</span><span style="color:#b1b1b3">;</span></div>
<div class="t mono" style="left:1029.00px;top:1042.00px;font-size:24.5px;color:#b1b1b3;font-family:'Liberation Mono',monospace;">}</div>
<svg style="left:1026px;top:1086px;" width="22" height="20" viewBox="1026 1086 22 20"><path d="M1036.2 1089.9 V1101.4 M1031 1092.7 L1041.4 1098.6 M1031 1098.6 L1041.4 1092.7" stroke="#bfbfc1" stroke-width="2.3" stroke-linecap="round"/></svg>
<svg style="left:1050px;top:1078px;" width="40" height="36" viewBox="1050 1078 40 36"><rect x="1063.5" y="1088.45" width="16.1" height="16.1" rx="3.2200000000000006" fill="none" stroke="#8e8e90" stroke-width="4.4"/><path d="M1071.55 1082.05 V1088.45 M1071.55 1104.55 V1110.95 M1057.1 1096.5 H1063.5 M1079.6 1096.5 H1086.0" stroke="#8e8e90" stroke-width="2.2"/></svg>
<div class="t mono" style="left:1102.60px;top:1083.00px;font-size:24.5px;color:#b1b1b3;font-family:'Liberation Mono',monospace;">{</div>
<div class="t mono" style="left:1922.28px;top:1084.00px;font-size:24.5px;color:#8b8b8d;font-family:'Liberation Mono',monospace;">inline:2</div>
<div class="t mono" style="left:1072.80px;top:1119.00px;font-size:24.5px;color:#b1b1b3;font-family:'Liberation Mono',monospace;"><span style="color:#75bfff">margin</span><span style="color:#b1b1b3">:</span></div>
<svg style="left:1180px;top:1118px;" width="40" height="24" viewBox="1180 1118 40 24"><path d="M1188 1122.2 L1199.8 1130 L1188 1137.8 Z" fill="#8a8a8c" stroke="#8a8a8c" stroke-width="1" stroke-linejoin="round"/></svg>
<div class="t mono" style="left:1207.90px;top:1119.00px;font-size:24.5px;color:#b1b1b3;font-family:'Liberation Mono',monospace;"><span style="color:#ff7de9">0</span><span style="color:#b1b1b3">;</span></div>
<div class="t mono" style="left:1071.80px;top:1151.00px;font-size:24.5px;color:#b1b1b3;font-family:'Liberation Mono',monospace;"><span style="color:#75bfff">padding</span><span style="color:#b1b1b3">:</span></div>
<svg style="left:1195px;top:1149px;" width="40" height="24" viewBox="1195 1149 40 24"><path d="M1203 1153.7 L1214.8 1161.5 L1203 1169.3 Z" fill="#8a8a8c" stroke="#8a8a8c" stroke-width="1" stroke-linejoin="round"/></svg>
<div class="t mono" style="left:1222.70px;top:1151.00px;font-size:24.5px;color:#b1b1b3;font-family:'Liberation Mono',monospace;"><span style="color:#ff7de9">0</span><span style="color:#b1b1b3">;</span></div>
<div class="t mono" style="left:1070.80px;top:1183.00px;font-size:24.5px;color:#b1b1b3;font-family:'Liberation Mono',monospace;"><span style="color:#75bfff">list-style</span><span style="color:#b1b1b3">:</span></div>
<svg style="left:1240px;top:1181px;" width="40" height="24" viewBox="1240 1181 40 24"><path d="M1247 1185.5 L1258.8 1193.3 L1247 1201.1 Z" fill="#8a8a8c" stroke="#8a8a8c" stroke-width="1" stroke-linejoin="round"/></svg>
<div class="t mono" style="left:1266.20px;top:1183.00px;font-size:24.5px;color:#b1b1b3;font-family:'Liberation Mono',monospace;"><span style="color:#ff7de9">none</span><span style="color:#b1b1b3">;</span></div>
<div class="t mono" style="left:1029.00px;top:1211.00px;font-size:24.5px;color:#b1b1b3;font-family:'Liberation Mono',monospace;">}</div>
<div class="a" style="left:96px;top:1020.6px;width:152.8px;height:31.8px;border:6.5px solid #e8484a;border-radius:4px;"></div>
<div class="a" style="left:1052.5px;top:1009.6px;width:388.5px;height:27.6px;border:6.5px solid #e8484a;border-radius:4px;"></div>
</div>
<div class="a" style="left:0;top:50px;width:2048px;height:1230px;border-radius:20px;box-shadow:inset 0 1.5px 0 rgba(200,200,200,0.62), inset 0 0 0 1px rgba(255,255,255,0.11);pointer-events:none;"></div>
</body></html>
